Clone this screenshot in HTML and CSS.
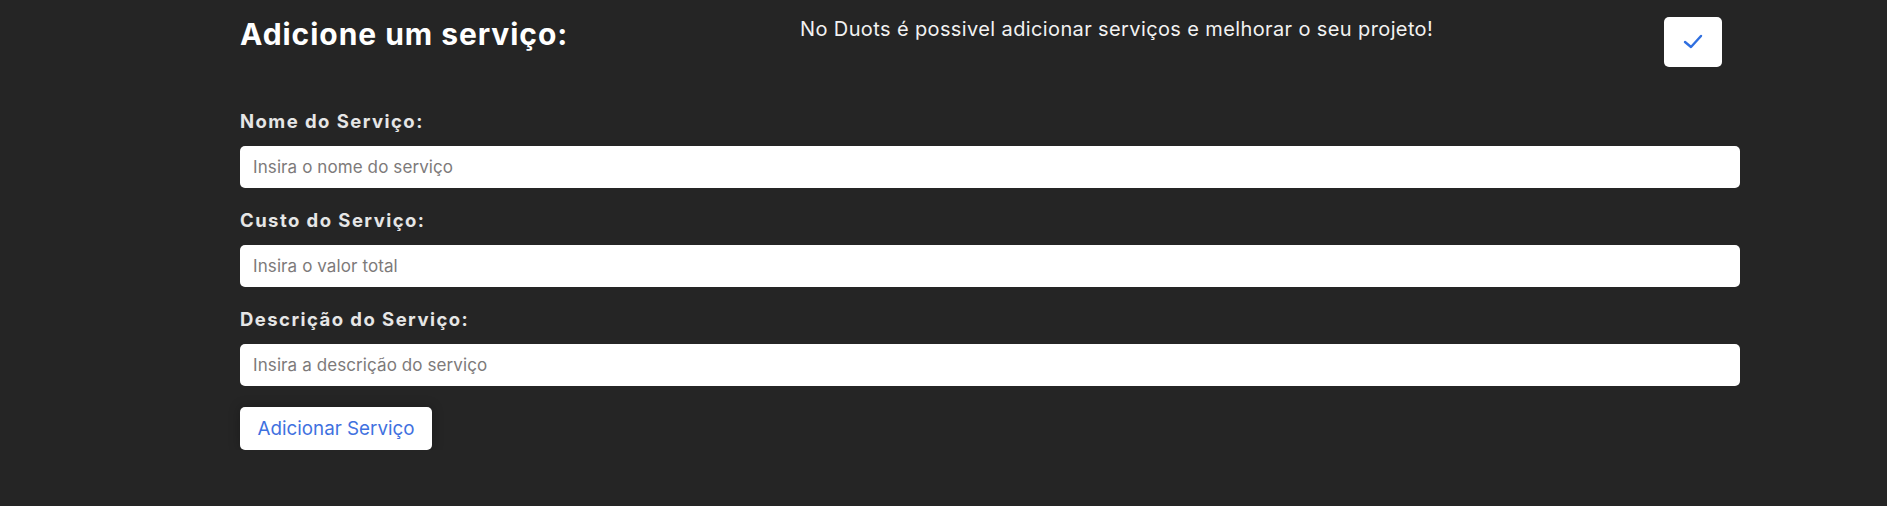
FILE: index.html
```html
<!DOCTYPE html>
<html lang="pt-BR">
<head>
<meta charset="utf-8">
<title>Adicione um serviço</title>
<link rel="stylesheet" href="styles.css">
</head>
<body>
<main class="page">
  <header class="head">
    <h1 class="title">Adicione um serviço:</h1>
    <p class="subtitle">No Duots é possivel adicionar serviços e melhorar o seu projeto!</p>
    <button class="check" type="button" aria-label="Confirmar">
      <svg width="20" height="16" viewBox="0 0 20 16"><polyline points="2,8 8,13 18,2" fill="none" stroke="#2f6fe0" stroke-width="2.4" stroke-linecap="round" stroke-linejoin="round"/></svg>
    </button>
  </header>
  <form class="form">
    <label class="field">
      <span class="label">Nome do Serviço:</span>
      <input class="input" type="text" placeholder="Insira o nome do serviço">
    </label>
    <label class="field">
      <span class="label">Custo do Serviço:</span>
      <input class="input" type="text" placeholder="Insira o valor total">
    </label>
    <label class="field">
      <span class="label">Descrição do Serviço:</span>
      <input class="input" type="text" placeholder="Insira a descrição do serviço">
    </label>
    <button class="submit" type="button">Adicionar Serviço</button>
  </form>
</main>
</body>
</html>
```

FILE: styles.css
```css
html, body {
  margin: 0;
  padding: 0;
  background: #252525;
}
body {
  font-family: Inter, "Noto Sans", sans-serif;
  color: #fff;
}
.page {
  width: 1500px;
  margin-left: 240px;
}
.head {
  display: grid;
  grid-template-columns: 560px 1fr auto;
  align-items: start;
  padding-right: 18px;
  height: 92px;
}
.title {
  margin: 14px 0 0;
  font-size: 30px;
  font-weight: 700;
  line-height: 40px;
  letter-spacing: 0.95px;
}
.subtitle {
  margin: 14px 0 0;
  font-size: 20px;
  font-weight: 400;
  line-height: 30px;
  letter-spacing: 0.38px;
  color: #f2f2f2;
}
.check {
  margin-top: 17px;
  width: 58px;
  height: 50px;
  border: none;
  border-radius: 5px;
  background: #fff;
  display: flex;
  align-items: center;
  justify-content: center;
  padding: 0;
}
.form {
  display: flex;
  flex-direction: column;
  align-items: flex-start;
}
.field {
  display: flex;
  flex-direction: column;
  width: 100%;
  margin-bottom: 3px;
}
.label {
  font-size: 18.5px;
  font-weight: 700;
  line-height: 24px;
  letter-spacing: 1.45px;
  color: #e6e6e6;
  margin: 17px 0 13px;
}
.input {
  box-sizing: border-box;
  height: 42px;
  width: 100%;
  border: none;
  border-radius: 5px;
  background: #fff;
  padding: 0 13px;
  font-family: inherit;
  font-size: 17px;
  letter-spacing: 0.1px;
  color: #333;
  outline: none;
}
.input::placeholder {
  color: #7d7a7a;
}
.submit {
  margin-top: 18px;
  box-sizing: border-box;
  width: 192px;
  height: 43px;
  border: none;
  border-radius: 5px;
  background: #fff;
  color: #3f71e0;
  font-family: inherit;
  font-size: 18.8px;
  padding: 0;
  box-shadow: 0 0 12px rgba(0,0,0,0.25);
}
```
